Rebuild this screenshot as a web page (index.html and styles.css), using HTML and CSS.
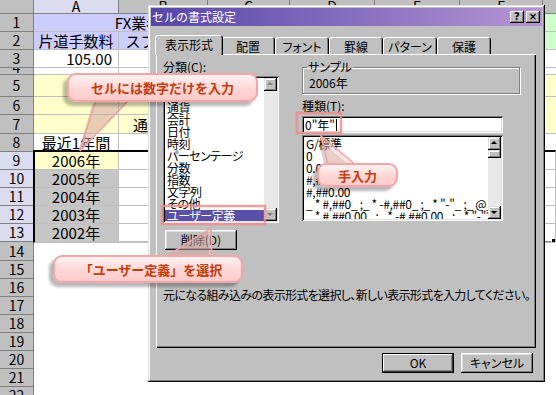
FILE: index.html
```html
<!DOCTYPE html>
<html lang="ja">
<head>
    <meta charset="UTF-8">
    <title>セルの書式設定</title>
    <link rel="stylesheet" href="styles.css">
</head>
<body>
<div class="screen">

    <!-- ワークシート -->
    <div class="sheet">
        <div class="h"></div><div class="h on">A</div><div class="h">B</div><div class="h">C</div><div class="h">D</div><div class="h">E</div><div class="h">F</div><div class="h">G</div>

        <div class="h">1</div><div class="lav s3 title">FX業者手数料比較</div><div class="lav s3"></div><div class="grn"></div>
        <div class="h">2</div><div class="lav">片道手数料</div><div class="lav">スプレッド</div><div class="lav s4"></div><div class="grn"></div>
        <div class="h">3</div><div class="num">105.00</div><div></div><div class="s4"></div><div></div>
        <div class="h low">4</div><div></div><div></div><div class="s4"></div><div></div>
        <div class="h">5</div><div class="yel"></div><div class="yel"></div><div class="yel s4"></div><div class="yel"></div>
        <div class="h">6</div><div class="yel"></div><div class="yel"></div><div class="yel s4"></div><div class="yel nb"></div>
        <div class="h">7</div><div class="yel"></div><div class="yel">通貨ペア</div><div class="yel s4"></div><div class="yel"></div>
        <div class="h">8</div><div>最近1年間</div><div></div><div class="s4"></div><div></div>
        <div class="h on">9</div><div class="yel">2006年</div><div></div><div class="s4"></div><div></div>
        <div class="h on">10</div><div class="gry">2005年</div><div></div><div class="s4"></div><div></div>
        <div class="h on">11</div><div class="gry">2004年</div><div></div><div class="s4"></div><div></div>
        <div class="h on">12</div><div class="gry">2003年</div><div></div><div class="s4"></div><div></div>
        <div class="h on">13</div><div class="gry">2002年</div><div></div><div class="s4"></div><div class="last"></div>

        <div class="h">14</div><div class="s7"></div>
        <div class="h">15</div><div class="s7"></div>
        <div class="h">16</div><div class="s7"></div>
        <div class="h">17</div><div class="s7"></div>
        <div class="h">18</div><div class="s7"></div>
        <div class="h">19</div><div class="s7"></div>
        <div class="h">20</div><div class="s7"></div>
        <div class="h">21</div><div class="s7"></div>
        <div class="h">22</div><div class="s7"></div>

        <div class="selbox"></div>
    </div>

    <!-- セルの書式設定ダイアログ -->
    <div class="dialog">
        <div class="titlebar">
            <span>セルの書式設定</span>
            <span class="tbtns"><b class="tbtn">?</b><b class="tbtn">×</b></span>
        </div>
        <div class="dbody">
            <div class="tabs">
                <div class="tab on">表示形式</div>
                <div class="tab">配置</div>
                <div class="tab">フォント</div>
                <div class="tab">罫線</div>
                <div class="tab">パターン</div>
                <div class="tab">保護</div>
            </div>
            <div class="panel">
                <div class="cols">
                    <div class="lcol">
                        <div class="lbl">分類(C):</div>
                        <div class="listbox cat">
                            <ul class="items">
                                <li>標準</li>
                                <li>数値</li>
                                <li>通貨</li>
                                <li>会計</li>
                                <li>日付</li>
                                <li>時刻</li>
                                <li>パーセンテージ</li>
                                <li>分数</li>
                                <li>指数</li>
                                <li>文字列</li>
                                <li>その他</li>
                                <li class="sel">ユーザー定義</li>
                            </ul>
                            <div class="vscroll">
                                <span class="sbtn up"></span>
                                <span class="track"></span>
                                <span class="sbtn down"></span>
                            </div>
                        </div>
                        <button class="btn del">削除(D)</button>
                    </div>
                    <div class="rcol">
                        <fieldset class="sample">
                            <legend>サンプル</legend>
                            2006年
                        </fieldset>
                        <div class="lbl kind">種類(T):</div>
                        <div class="field">0"年"<span class="caret"></span></div>
                        <div class="listbox fmt">
                            <ul class="items">
                                <li>G/標準</li>
                                <li>0</li>
                                <li>0.00</li>
                                <li>#,##0</li>
                                <li>#,##0.00</li>
                                <li>_ * #,##0_ ;_ * -#,##0_ ;_ * "-"_ ;_ @_ </li>
                                <li>_ * #,##0.00_ ;_ * -#,##0.00_ ;_ * "-"??_ ;_ @_ </li>
                                <li>_ ¥* #,##0_ ;_ ¥* -#,##0_ ;_ ¥* "-"_ ;_ @_ </li>
                            </ul>
                            <div class="vscroll">
                                <span class="sbtn up"></span>
                                <span class="sbtn thumb"></span>
                                <span class="track"></span>
                                <span class="sbtn down"></span>
                            </div>
                        </div>
                    </div>
                </div>
                <p class="desc">元になる組み込みの表示形式を選択し、新しい表示形式を入力してください。</p>
            </div>
            <div class="actions">
                <button class="btn def">OK</button>
                <button class="btn">キャンセル</button>
            </div>
        </div>
    </div>

    <!-- 吹き出しの尾と枠 -->
    <svg class="marks" width="556" height="395" viewBox="0 0 556 395">
        <g class="shade">
            <polygon points="96,100 129,100 80,151"/>
            <polygon points="328,165 356,165 321,136"/>
            <polygon points="165,257 212,257 211,228"/>
        </g>
        <polygon class="tail" points="96,100 129,100 80,151"/>
        <polygon class="tail" points="328,165 356,165 321,136"/>
        <polygon class="tail" points="165,257 212,257 211,228"/>
        <rect class="frame" x="162" y="206" width="103" height="18"/>
        <rect class="frame" x="297" y="113" width="44" height="20"/>
    </svg>

    <div class="callout c1">セルには数字だけを入力</div>
    <div class="callout c2">手入力</div>
    <div class="callout c3">「ユーザー定義」を選択</div>
</div>
</body>
</html>
```

FILE: styles.css
```css
* {
    box-sizing: border-box;
}

body {
    margin: 0;
    background-color: #fff;
    overflow: hidden;
    font-family: "Noto Sans CJK JP", sans-serif;
}

.screen {
    position: relative;
    width: 556px;
    height: 395px;
    overflow: hidden;
}

/* ワークシート */
.sheet {
    position: relative;
    display: grid;
    grid-template-columns: 34px 85px 89px 82px 85px 85px 83px 40px;
    grid-template-rows: 14px 18px 18px 18px 7px 22px 18px 19px 18px 18px 18px 18px 18px 18px 19px repeat(8, 18px);
    font-size: 15px;
    line-height: 17px;
    color: #000;
}

.sheet > div {
    display: flex;
    align-items: center;
    justify-content: center;
    overflow: hidden;
    white-space: nowrap;
    border-right: 1px solid #c0c0c0;
    border-bottom: 1px solid #c0c0c0;
}

.sheet > .h {
    background-color: #c0c0c0;
    border-color: #808080;
    font-size: 14px;
}

.sheet > .h.on {
    background-color: #dcdcf0;
}

.sheet > .low {
    align-items: flex-end;
    line-height: 13px;
}

.sheet > .title {
    padding-left: 28px;
}

.sheet > .s3 { grid-column: span 3; }
.sheet > .s4 { grid-column: span 4; }

.sheet > .s7 {
    grid-column: span 7;
    border: 0;
}

.sheet > .nb { border-bottom-color: transparent; }
.sheet > .last { border-bottom-color: #808080; }

.lav { background-color: #ccccff; }
.grn { background-color: #ccffcc; }
.yel { background-color: #ffffcc; }
.gry { background-color: #c6c6c6; }

.sheet > .num {
    justify-content: flex-end;
    padding-right: 6px;
}

.selbox {
    position: absolute;
    grid-column: 2;
    grid-row: 10 / 15;
    top: -2px;
    left: -1px;
    right: 0;
    bottom: -1px;
    border: 2px solid #000;
}

.selbox::after {
    content: "";
    position: absolute;
    right: -5px;
    bottom: -5px;
    width: 7px;
    height: 7px;
    background-color: #000;
    border: 1px solid #fff;
}

/* ダイアログ */
.dialog {
    position: absolute;
    left: 148px;
    top: 5px;
    width: 397px;
    height: 377px;
    padding: 3px;
    background-color: #c0c0c0;
    font-size: 12px;
    line-height: 12px;
    color: #000;
    box-shadow: inset -1px -1px #000, inset 1px 1px #dfdfdf, inset -2px -2px #808080, inset 2px 2px #fff;
}

.titlebar {
    height: 18px;
    display: flex;
    align-items: center;
    justify-content: space-between;
    padding: 0 2px 0 1px;
    background: linear-gradient(to right, #5646a6, #7a66ba 40%, #b894d4);
    color: #fff;
}

.tbtns {
    display: flex;
    gap: 2px;
}

.tbtn {
    width: 14px;
    height: 12px;
    background-color: #c0c0c0;
    color: #000;
    font: bold 10px/12px "DejaVu Sans", sans-serif;
    text-align: center;
    box-shadow: inset -1px -1px #000, inset 1px 1px #fff, inset -2px -2px #808080;
}

.dbody {
    padding: 9px 6px 0 5px;
    font-feature-settings: "palt";
}

.tabs {
    display: flex;
    align-items: flex-end;
    height: 19px;
    padding-left: 1px;
}

.tab {
    height: 17px;
    min-width: 54px;
    padding: 4px 3px 0;
    text-align: center;
    border-radius: 3px 3px 0 0;
    box-shadow: inset 1px 1px #fff, inset -1px 0 #000, inset -2px 0 #808080;
}

.tab.on {
    position: relative;
    z-index: 1;
    height: 20px;
    margin: 0 -2px -1px;
    padding: 4px 10px 0;
    background-color: #c0c0c0;
}

.panel {
    height: 294px;
    padding: 7px 0 0 7px;
    box-shadow: inset 1px 1px #fff, inset -1px -1px #000, inset -2px -2px #808080;
}

.cols {
    display: flex;
    gap: 23px;
}

.lcol {
    width: 116px;
}

.rcol {
    width: 218px;
}

.lbl {
    height: 12px;
    margin-bottom: 3px;
}

.lbl.kind {
    margin-top: 6px;
    margin-bottom: 4px;
}

.listbox {
    display: flex;
    background-color: #fff;
    padding: 2px;
    box-shadow: inset 1px 1px #808080, inset -1px -1px #fff, inset 2px 2px #000, inset -2px -2px #dfdfdf;
}

.listbox.cat {
    height: 147px;
}

.listbox.fmt {
    width: 201px;
    height: 86px;
}

.items {
    flex: 1;
    margin: 0;
    padding: 0;
    list-style: none;
    overflow: hidden;
    white-space: nowrap;
}

.items li {
    height: 12px;
    padding-left: 2px;
    letter-spacing: -0.5px;
}

.fmt .items li {
    letter-spacing: -0.3px;
}

.fmt .items {
    padding-top: 1px;
}

.items li.sel {
    background-color: #5a50a8;
    color: #fff;
    height: 13px;
}

.vscroll {
    width: 13px;
    display: flex;
    flex-direction: column;
}

.sbtn {
    position: relative;
    height: 13px;
    background-color: #c0c0c0;
    box-shadow: inset -1px -1px #000, inset 1px 1px #dfdfdf, inset -2px -2px #808080, inset 2px 2px #fff;
}

.sbtn.thumb {
    height: 8px;
}

.sbtn.up::after,
.sbtn.down::after {
    content: "";
    position: absolute;
    left: 3px;
    top: 4px;
    border-left: 3px solid transparent;
    border-right: 3px solid transparent;
}

.sbtn.up::after {
    border-bottom: 3px solid #000;
}

.sbtn.down::after {
    top: 5px;
    border-top: 3px solid #000;
}

.cat .sbtn.up::after { border-bottom-color: #808080; }
.cat .sbtn.down::after { border-top-color: #808080; }

.track {
    flex: 1;
    background-color: #e8e8e8;
}

.btn {
    display: block;
    height: 20px;
    width: 72px;
    padding: 0;
    border: 0;
    background-color: #c0c0c0;
    font: 12px/12px "Noto Sans CJK JP", sans-serif;
    font-feature-settings: "palt";
    color: #000;
    box-shadow: inset -1px -1px #000, inset 1px 1px #fff, inset -2px -2px #808080, inset 2px 2px #dfdfdf;
}

.btn.del {
    margin: 7px 0 0 2px;
}

.btn.def {
    border: 1px solid #000;
    box-shadow: inset -1px -1px #404040, inset 1px 1px #fff, inset -2px -2px #808080;
}

.sample {
    margin: 0;
    padding: 4px 6px 4px;
    min-width: 0;
    border: 1px solid #808080;
    box-shadow: 1px 1px #fff, inset 1px 1px #fff;
}

.sample legend {
    margin-left: -2px;
    padding: 0 1px;
    line-height: 12px;
}

.field {
    display: flex;
    align-items: center;
    width: 201px;
    height: 17px;
    padding: 0 3px;
    background-color: #fff;
    box-shadow: inset 1px 1px #808080, inset -1px -1px #fff, inset 2px 2px #000, inset -2px -2px #dfdfdf;
    margin-bottom: 2px;
}

.caret {
    width: 1px;
    height: 12px;
    margin-left: 1px;
    background-color: #000;
}

.desc {
    margin: 39px 0 0 0;
    letter-spacing: -0.65px;
}

.actions {
    display: flex;
    justify-content: flex-end;
    gap: 7px;
    margin-top: 5px;
    padding-right: 3px;
}

/* 吹き出し */
.marks {
    position: absolute;
    left: 0;
    top: 0;
}

.shade polygon {
    fill: rgba(0, 0, 0, 0.16);
    transform: translate(-3px, 3px);
}

.tail {
    fill: rgba(255, 196, 196, 0.45);
    stroke: #f2a2a2;
    stroke-width: 1.5;
}

.frame {
    fill: none;
    stroke: rgba(240, 140, 140, 0.85);
    stroke-width: 2.5;
}

.callout {
    position: absolute;
    display: flex;
    align-items: center;
    justify-content: center;
    border: 2px solid #f3a6a6;
    border-radius: 9px;
    background: linear-gradient(#fff2f2, #ffd6d6 55%, #ffcaca);
    box-shadow: -4px 4px 3px rgba(0, 0, 0, 0.28);
    color: #c53d0c;
    font: bold 13px/1 "Noto Sans CJK JP", sans-serif;
    white-space: nowrap;
}

.c1 {
    left: 67px;
    top: 73px;
    width: 191px;
    height: 29px;
}

.c2 {
    left: 317px;
    top: 163px;
    width: 81px;
    height: 24px;
}

.c3 {
    left: 53px;
    top: 255px;
    width: 190px;
    height: 28px;
    padding-left: 6px;
}
```
